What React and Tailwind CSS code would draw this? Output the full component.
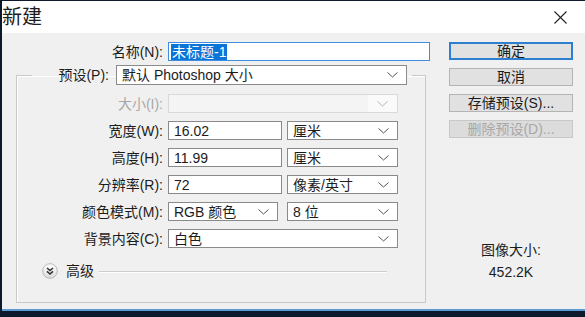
const font = "font-['Liberation_Sans','Noto_Sans_CJK_SC',sans-serif]";

function Chevron({ color = "#555" }) {
  return (
    <svg width="11" height="6" viewBox="0 0 11 6" className="shrink-0">
      <path d="M0.5 0.5 L5.5 5 L10.5 0.5" fill="none" stroke={color} strokeWidth="1" />
    </svg>
  );
}

function Select({ value, className = "", disabled = false }) {
  if (disabled) {
    return (
      <div className={`h-[19px] flex border border-[#d9d9d9] bg-[#f4f4f4] ${className}`}>
        <div className="flex-1" />
        <div className="w-[29px] flex items-center justify-center bg-[#fafafa]">
          <Chevron color="#b5b5b5" />
        </div>
      </div>
    );
  }
  return (
    <div className={`h-[19px] flex items-center justify-between pl-[5px] pr-[8px] border border-[#8a8a8a] bg-white ${className}`}>
      <span className="leading-none">{value}</span>
      <Chevron />
    </div>
  );
}

function Input({ value, className = "" }) {
  return (
    <div className={`h-[19px] flex items-center pl-[5px] border border-[#8a8a8a] bg-white ${className}`}>
      <span className="leading-none">{value}</span>
    </div>
  );
}

function Row({ label, children, disabled = false }) {
  return (
    <div className="flex items-center h-[19px]">
      <div className={`w-[151px] text-right pr-[5px] leading-none ${disabled ? "text-[#a8a8a8]" : ""}`}>
        {label}
      </div>
      {children}
    </div>
  );
}

function Button({ children, primary = false, disabled = false }) {
  return (
    <div
      className={`h-[18px] flex items-center justify-center leading-none ${
        primary ? "border-2 border-[#2f7fd0] bg-[#e1e1e1]" : "border border-[#b4b4b4]"
      } ${disabled ? "text-[#a8a8a8] bg-[#dcdcdc] border-[#c8c8c8]" : "bg-[#e1e1e1]"}`}
    >
      {children}
    </div>
  );
}

export default function App() {
  return (
    <div className={`w-[585px] h-[317px] bg-[#0c1a2c] pl-[2px] pt-[1px] pb-[6px] flex flex-col text-[14px] text-[#1c1c1c] ${font}`}>
      <div className="flex-1 flex flex-col bg-[#f0f0f0] border-b-2 border-[#5d9bd5]">
        {/* 标题栏 */}
        <div className="h-[32px] bg-white flex items-center justify-between shrink-0">
          <span className="text-[20px] leading-none">新建</span>
          <svg width="13" height="13" viewBox="0 0 13 13" className="mr-[18px]">
            <path d="M0.5 0.5 L12.5 12.5 M12.5 0.5 L0.5 12.5" stroke="#222" strokeWidth="1.1" />
          </svg>
        </div>

        <div className="flex-1 flex">
          {/* 左侧表单 */}
          <div className="w-[447px] pl-[14px] pt-[9px]">
            <div className="flex items-center h-[19px]">
              <div className="w-[152px] text-right pr-[5px] leading-none">名称(N):</div>
              <div className="w-[262px] h-[19px] flex items-center pl-[2px] border border-[#3d8ee0] bg-white">
                <span className="bg-[#0a74d8] text-white leading-none px-[1px] py-[1px]">未标题-1</span>
              </div>
            </div>

            <fieldset className="mt-[4px] w-[410px] h-[238px] border border-[#c9c9c9] shadow-[inset_1px_1px_0_#fff]">
              <legend className="ml-[15px] pr-[5px] flex items-center">
                <div className="w-[77px] text-right leading-none">预设(P):</div>
                <Select value="默认 Photoshop 大小" className="ml-[7px] w-[291px] h-[20px]" />
              </legend>

              <div className="flex flex-col gap-[8px] pt-[9px]">
                <Row label="大小(I):" disabled>
                  <Select value="" disabled className="w-[230px]" />
                </Row>
                <Row label="宽度(W):">
                  <Input value="16.02" className="w-[114px]" />
                  <Select value="厘米" className="ml-[5px] w-[111px]" />
                </Row>
                <Row label="高度(H):">
                  <Input value="11.99" className="w-[114px]" />
                  <Select value="厘米" className="ml-[5px] w-[111px]" />
                </Row>
                <Row label="分辨率(R):">
                  <Input value="72" className="w-[114px]" />
                  <Select value="像素/英寸" className="ml-[5px] w-[111px]" />
                </Row>
                <Row label="颜色模式(M):">
                  <Select value="RGB 颜色" className="w-[110px]" />
                  <Select value="8 位" className="ml-[9px] w-[111px]" />
                </Row>
                <Row label="背景内容(C):">
                  <Select value="白色" className="w-[230px]" />
                </Row>
              </div>

              <div className="flex items-center mt-[15px] pl-[25px]">
                <svg width="16" height="16" viewBox="0 0 16 16" className="shrink-0">
                  <defs>
                    <linearGradient id="adv" x1="0" y1="0" x2="0" y2="1">
                      <stop offset="0" stopColor="#ffffff" />
                      <stop offset="1" stopColor="#dcdcdc" />
                    </linearGradient>
                  </defs>
                  <circle cx="8" cy="8" r="7.3" fill="url(#adv)" stroke="#b0b0b0" strokeWidth="0.9" />
                  <path d="M5 5 L8 7.6 L11 5 M5 8.4 L8 11 L11 8.4" fill="none" stroke="#333" strokeWidth="1.5" />
                </svg>
                <span className="ml-[8px] leading-none">高级</span>
                <div className="ml-[5px] w-[288px] h-px bg-[#cdcdcd] shadow-[0_1px_0_#fff]" />
              </div>
            </fieldset>
          </div>

          {/* 右侧按钮 */}
          <div className="w-[124px] pt-[9px] flex flex-col">
            <Button primary>确定</Button>
            <div className="mt-[8px]">
              <Button>取消</Button>
            </div>
            <div className="mt-[8px]">
              <Button>存储预设(S)...</Button>
            </div>
            <div className="mt-[8px]">
              <Button disabled>删除预设(D)...</Button>
            </div>
            <div className="mt-[105px] flex flex-col items-center leading-none">
              <span>图像大小:</span>
              <span className="mt-[8px]">452.2K</span>
            </div>
          </div>
        </div>
      </div>
    </div>
  );
}
